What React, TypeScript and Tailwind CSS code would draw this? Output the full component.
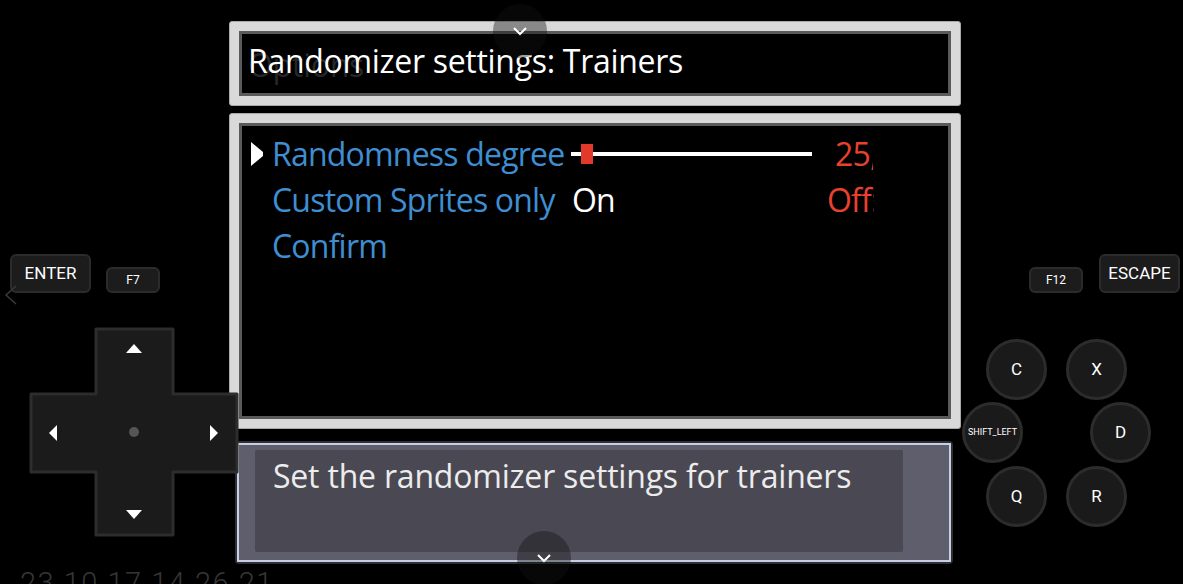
import React from 'react';

interface KeyProps {
  label: string;
  className: string;
  small?: boolean;
}

// Rectangular keys on the touch overlay (ENTER, F7, ...)
const KeyButton: React.FC<KeyProps> = ({ label, className, small }) => (
  <div
    className={`shrink-0 flex items-center justify-center rounded-[6px] border-2 border-[#2b2b2b] bg-[#1c1c1c] text-white font-['Roboto',sans-serif] ${
      small ? 'text-[12px]' : 'text-[17px]'
    } ${className}`}
  >
    {label}
  </div>
);

// Round action buttons on the right side
const RoundButton: React.FC<{ label: string; small?: boolean }> = ({ label, small }) => (
  <div
    className={`shrink-0 w-[61px] h-[61px] rounded-full flex items-center justify-center border-[3px] border-[#2c2c2c] bg-[#1a1a1a] text-white font-['Roboto',sans-serif] ${
      small ? 'text-[9px]' : 'text-[17px]'
    }`}
  >
    {label}
  </div>
);

const Frame: React.FC<{ className?: string; children?: React.ReactNode }> = ({ className, children }) => (
  <div className={`rounded-[3px] border border-[#a9a9a9] bg-[#d9d9d9] p-[9px] ${className ?? ''}`}>
    <div className="h-full border-[3px] border-[#5a5a5a] bg-black">{children}</div>
  </div>
);

const DPad: React.FC = () => (
  <svg className="relative z-10 shrink-0 mt-[34px] ml-[29px]" width="210" height="210" viewBox="0 0 210 210">
    <path
      d="M67 2 H144 V67 H208 V145 H144 V208 H67 V145 H2 V67 H67 Z"
      fill="#1b1b1b"
      stroke="#2d2d2d"
      strokeWidth="3"
      strokeLinejoin="round"
    />
    {/* arrows */}
    <path d="M105 17 L113 26 H97 Z" fill="#fff" />
    <path d="M105 192 L113 183 H97 Z" fill="#fff" />
    <path d="M20 106 L28 98 V114 Z" fill="#fff" />
    <path d="M189 106 L181 98 V114 Z" fill="#fff" />
    <circle cx="105" cy="105" r="5" fill="#555" />
  </svg>
);

const Chevron: React.FC<{ className: string }> = ({ className }) => (
  <div className={`absolute w-[54px] h-[54px] rounded-full bg-[rgba(18,18,18,0.4)] flex items-center justify-center ${className}`}>
    <svg width="16" height="10" viewBox="0 0 16 10">
      <path d="M2 2 L8 8 L14 2" fill="none" stroke="#fff" strokeWidth="2" />
    </svg>
  </div>
);

export default function App() {
  return (
    <div className="relative flex w-[1183px] h-[584px] overflow-hidden bg-black font-['Open_Sans',sans-serif]">
      {/* Left side of the touch overlay */}
      <div className="w-[229px] shrink-0 flex flex-col">
        <div className="relative flex items-end gap-[15px] pt-[254px] pl-[10px]">
          <svg className="absolute left-[3px] top-[284px]" width="16" height="24" viewBox="0 0 16 24">
            <path d="M13 2 L3 11 L13 20" fill="none" stroke="#3a3a3a" strokeWidth="1.5" />
          </svg>
          <KeyButton label="ENTER" className="w-[81px] h-[39px]" />
          <KeyButton label="F7" small className="w-[54px] h-[26px]" />
        </div>
        <DPad />
      </div>

      {/* Game screen */}
      <div className="w-[732px] shrink-0 pt-[21px] flex flex-col">
        <Frame className="h-[85px]">
          <div className="relative pl-[6px] pt-[11px] text-[32px] leading-none tracking-[-0.3px] text-white whitespace-nowrap">
            <span className="absolute left-[6px] top-[15px] text-[rgba(255,255,255,0.16)]">Options</span>
            <span className="relative">Randomizer settings: Trainers</span>
          </div>
        </Frame>

        <Frame className="mt-[7px] h-[316px]">
          <div className="pt-[5px] pl-[2px] text-[32px] leading-[46px] tracking-[-0.8px] whitespace-nowrap">
            <div className="flex items-center">
              <svg className="ml-[5px] mr-[7px]" width="16" height="26" viewBox="0 0 16 26">
                <path d="M2 1 L14 11 L14 15 L2 25 Z" fill="#fff" />
              </svg>
              <span className="w-[299px] text-[#3f8ed1]">Randomness degree</span>
              <div className="relative w-[241px] h-[4px] bg-white">
                <div className="absolute left-[10px] top-[-8px] w-[12px] h-[20px] bg-[#e3392b]" />
              </div>
              <div className="ml-[13px] w-[48px] overflow-hidden text-[#e8412f]">
                <span className="pl-[10px]">25,</span>
              </div>
            </div>
            <div className="flex items-center pl-[28px]">
              <span className="w-[300px] text-[#3f8ed1]">Custom Sprites only</span>
              <span className="w-[255px] text-white">On</span>
              <div className="w-[47px] overflow-hidden text-[#e8412f]">Off:</div>
            </div>
            <div className="pl-[28px] text-[#3f8ed1]">Confirm</div>
          </div>
        </Frame>

        <div className="mt-[12px] ml-[6px] w-[718px] h-[123px] rounded-[4px] border-2 border-[#2f2f35]">
          <div className="h-full border-2 border-[#c6d0e3] bg-[#5f5e6d] pt-[5px] pl-[16px] pr-[46px] pb-[8px]">
            <div className="h-full rounded-[2px] bg-[#4a4953] pl-[18px] pt-[10px] text-[32px] leading-none tracking-[-0.2px] text-[#ececec] whitespace-nowrap">
              Set the randomizer settings for trainers
            </div>
          </div>
        </div>
      </div>

      {/* Right side of the touch overlay */}
      <div className="flex-1 flex flex-col">
        <div className="flex items-end gap-[16px] pt-[254px] pl-[68px]">
          <KeyButton label="F12" small className="w-[54px] h-[26px]" />
          <KeyButton label="ESCAPE" className="w-[81px] h-[39px]" />
        </div>
        <div className="mt-[46px] flex flex-col gap-[2px]">
          <div className="flex gap-[19px] pl-[25px]">
            <RoundButton label="C" />
            <RoundButton label="X" />
          </div>
          <div className="flex gap-[67px] pl-[1px]">
            <RoundButton label="SHIFT_LEFT" small />
            <RoundButton label="D" />
          </div>
          <div className="mt-[1px] flex gap-[19px] pl-[25px]">
            <RoundButton label="Q" />
            <RoundButton label="R" />
          </div>
        </div>
      </div>

      <Chevron className="left-[493px] top-[4px]" />
      <Chevron className="left-[517px] top-[531px]" />

      {/* faded timestamp watermark */}
      <div className="absolute left-[20px] top-[569px] text-[29px] leading-none text-[#363636] font-['Roboto',sans-serif] font-light tracking-[1.5px] whitespace-nowrap">
        23 10 17 14 26 21
      </div>
    </div>
  );
}
